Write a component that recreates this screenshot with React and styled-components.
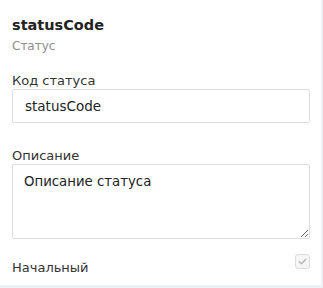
import React from "react";
import styled, { createGlobalStyle } from "styled-components";

const Global = createGlobalStyle`
  html, body {
    margin: 0;
    padding: 0;
    background: #eef0f3;
    font-family: "DejaVu Sans", "Open Sans", sans-serif;
    color: #222;
  }
`;

const Card = styled.section`
  width: 321px;
  height: 285px;
  box-sizing: border-box;
  background: #fff;
  padding: 15px 11px 0 12px;
  display: flex;
  flex-direction: column;
`;

const Title = styled.h2`
  margin: 0;
  font-size: 14.5px;
  font-weight: 700;
  line-height: 20px;
  color: #222;
`;

const Subtitle = styled.div`
  font-size: 12px;
  line-height: 16px;
  color: #8f8f8f;
  margin-top: 3px;
`;

const Field = styled.label`
  display: flex;
  flex-direction: column;
  margin-top: ${p => p.$top}px;
`;

const Label = styled.span`
  font-size: 13px;
  line-height: 16px;
  color: #333;
`;

const Input = styled.input`
  box-sizing: border-box;
  width: 100%;
  height: 34px;
  border: 1px solid #dedede;
  border-radius: 2px;
  padding: 0 12px;
  font-family: inherit;
  font-size: 13.5px;
  color: #222;
  outline: none;
`;

const TextArea = styled.textarea`
  box-sizing: border-box;
  width: 100%;
  height: 75px;
  border: 1px solid #dedede;
  border-radius: 2px;
  padding: 7px 11px;
  font-family: inherit;
  font-size: 13.3px;
  line-height: 19px;
  color: #222;
  outline: none;
  resize: vertical;
`;

const Row = styled.div`
  display: flex;
  align-items: flex-start;
  justify-content: space-between;
  margin-top: 21px;
`;

const Box = styled.span`
  width: 15px;
  height: 15px;
  margin-top: -6px;
  box-sizing: border-box;
  border: 1px solid #dcdcdc;
  border-radius: 3px;
  background: #f6f6f6;
  display: flex;
  align-items: center;
  justify-content: center;
`;

export default function App() {
  return (
    <>
      <Global />
      <Card>
        <Title>statusCode</Title>
        <Subtitle>Статус</Subtitle>
        <Field $top={19}>
          <Label>Код статуса</Label>
          <Input defaultValue="statusCode" />
        </Field>
        <Field $top={25}>
          <Label>Описание</Label>
          <TextArea defaultValue="Описание статуса" />
        </Field>
        <Row>
          <Label>Начальный</Label>
          <Box>
            <svg width="11" height="11" viewBox="0 0 11 11">
              <path d="M2.2 5.7 L4.5 7.8 L8.8 3.3" fill="none" stroke="#b8b8b8" strokeWidth="1.5" strokeLinecap="round" strokeLinejoin="round" />
            </svg>
          </Box>
        </Row>
      </Card>
    </>
  );
}
